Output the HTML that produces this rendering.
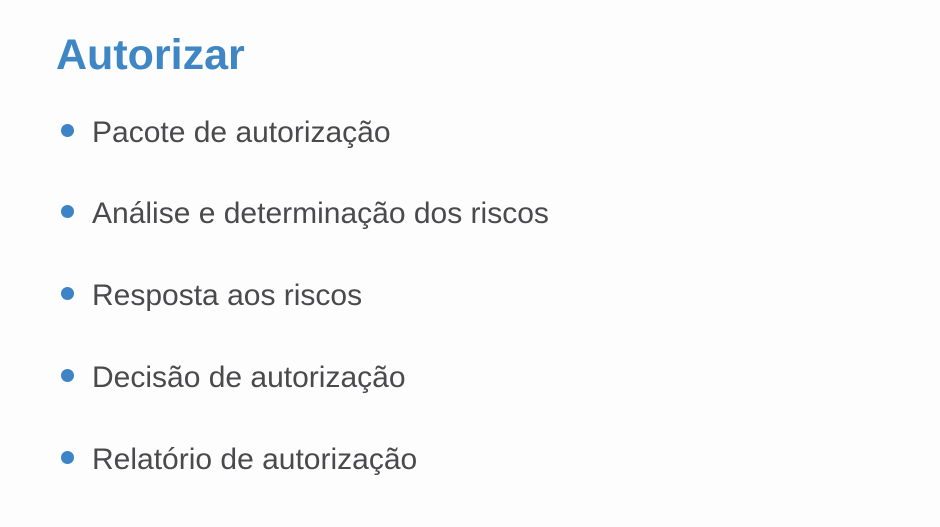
<!DOCTYPE html>
<html><head><meta charset="utf-8"><style>
html,body{margin:0;padding:0;width:940px;height:527px;background:#fdfdfe;overflow:hidden}
body{position:relative;font-family:"Liberation Sans",sans-serif}
h1{position:absolute;left:56px;top:0;margin:0;font-size:43px;font-weight:bold;color:#3f87c4;line-height:1;top:34px}
.r{position:absolute;left:92px;font-size:30px;color:#4a4a4c;line-height:1}
.d{position:absolute;left:61px;width:13px;height:13px;border-radius:50%;background:#3c84c5}
</style></head><body>
<h1>Autorizar</h1>
<div class="d" style="top:124px"></div><div class="r" style="top:118px">Pacote de autorização</div>
<div class="d" style="top:205px"></div><div class="r" style="top:199px">Análise e determinação dos riscos</div>
<div class="d" style="top:287px"></div><div class="r" style="top:281px">Resposta aos riscos</div>
<div class="d" style="top:369px"></div><div class="r" style="top:363px">Decisão de autorização</div>
<div class="d" style="top:451px"></div><div class="r" style="top:445px">Relatório de autorização</div>
</body></html>
